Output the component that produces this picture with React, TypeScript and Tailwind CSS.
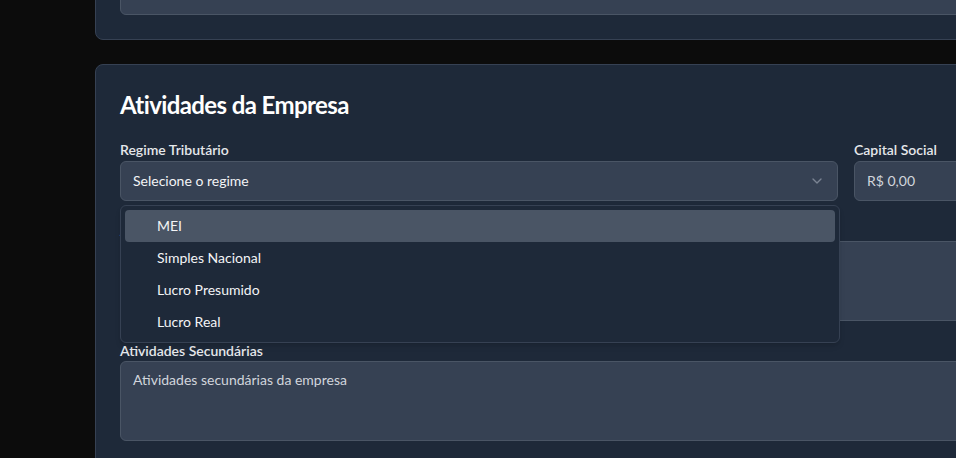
import { ChevronDown } from 'lucide-react';

const options = ['MEI', 'Simples Nacional', 'Lucro Presumido', 'Lucro Real'];

const labelClass = 'block text-sm leading-5 font-semibold text-gray-200';
const fieldClass = 'w-full rounded-md border border-gray-600 bg-gray-700 text-sm';

export default function App() {
  return (
    <div
      className="h-[458px] w-[956px] overflow-hidden bg-[#0c0c0c]"
      style={{ fontFamily: 'Lato, "Noto Sans", sans-serif' }}
    >
      <div className="-mt-[90px] w-[1160px] pl-[95px] space-y-6">
        <section className="rounded-lg border border-gray-700 bg-gray-800 p-6">
          <div className={`${fieldClass} h-20`} />
        </section>

        <section className="rounded-lg border border-gray-700 bg-gray-800 p-6">
          <h2 className="mb-[19px] text-2xl leading-8 font-bold tracking-tight text-white">Atividades da Empresa</h2>

          <div className="space-y-5">
            <div className="grid grid-cols-[718px_1fr] gap-4">
              <div className="relative">
                <label className={labelClass}>Regime Tributário</label>
                <div className={`${fieldClass} mt-px flex h-10 items-center justify-between px-3 text-gray-100`}>
                  <span>Selecione o regime</span>
                  <ChevronDown className="h-4 w-4 text-gray-400 opacity-70" />
                </div>

                <div className="absolute left-0 top-[65px] z-10 w-[720px] rounded-md border border-gray-700 bg-gray-800 p-1 shadow-md">
                  {options.map((o, i) => (
                    <div
                      key={o}
                      className={`flex h-8 items-center rounded-sm pl-8 text-sm text-gray-100 ${
                        i === 0 ? 'bg-gray-600' : ''
                      }`}
                    >
                      {o}
                    </div>
                  ))}
                </div>
              </div>

              <div>
                <label className={labelClass}>Capital Social</label>
                <div className={`${fieldClass} mt-px flex h-10 items-center px-3 text-gray-300`}>R$ 0,00</div>
              </div>
            </div>

            <div>
              <label className={labelClass}>Atividade Principal</label>
              <div className={`${fieldClass} h-20 px-3 py-2 text-gray-300`}>Descrição da atividade principal</div>
            </div>

            <div>
              <label className={labelClass}>Atividades Secundárias</label>
              <div className={`${fieldClass} h-20 px-3 py-2 text-gray-300`}>
                Atividades secundárias da empresa
              </div>
            </div>
          </div>
        </section>
      </div>
    </div>
  );
}
